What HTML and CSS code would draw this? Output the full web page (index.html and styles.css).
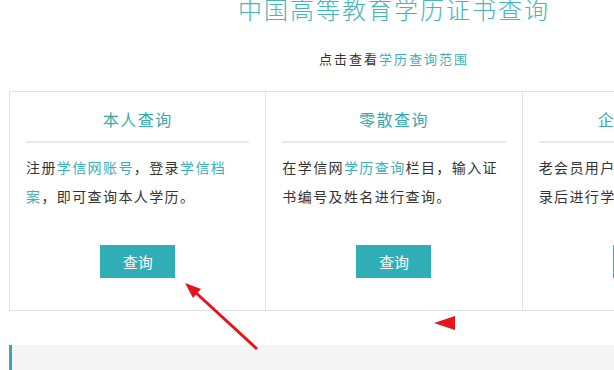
FILE: index.html
```html
<!DOCTYPE html>
<html lang="zh-CN">
<head>
    <meta charset="UTF-8">
    <title>学历查询</title>
    <link rel="stylesheet" href="styles.css">
</head>
<body>
    <div class="wrap">
        <h1 class="title">中国高等教育学历证书查询</h1>
        <p class="sub">点击查看<a href="#">学历查询范围</a></p>

        <!-- 三种查询方式 -->
        <div class="cards">
            <div class="card">
                <h3>本人查询</h3>
                <p>注册<a href="#">学信网账号</a>，登录<a href="#">学信档案</a>，即可查询本人学历。</p>
                <a class="btn" href="#">查询</a>
            </div>
            <div class="card">
                <h3>零散查询</h3>
                <p>在学信网<a href="#">学历查询</a>栏目，输入证书编号及姓名进行查询。</p>
                <a class="btn" href="#">查询</a>
            </div>
            <div class="card">
                <h3>企业用户查询</h3>
                <p>老会员用户可继续使用原账号登录后进行学历查询。</p>
                <a class="btn" href="#">查询</a>
            </div>
        </div>

        <div class="notice"></div>
    </div>

    <!-- 标注箭头 -->
    <svg class="marks" width="614" height="370" viewBox="0 0 614 370">
        <line x1="257" y1="349" x2="194" y2="291" stroke="#e8141a" stroke-width="3"/>
        <polygon points="185,283 201,289 193,298" fill="#e8141a"/>
        <polygon points="434,323 455,316 455,330" fill="#e8141a"/>
    </svg>
</body>
</html>
```

FILE: styles.css
```css
html, body {
    margin: 0;
    padding: 0;
    overflow: hidden;
    background: #fff;
}

body {
    font-family: "Noto Sans CJK SC", "Noto Sans", sans-serif;
    color: #333;
    position: relative;
    width: 614px;
    height: 370px;
}

a {
    color: #3ab0b6;
    text-decoration: none;
}

.wrap {
    width: 770px;
    margin-left: 9px;
}

.title {
    margin: -6px 0 0;
    font-size: 24px;
    line-height: 30px;
    font-weight: 300;
    letter-spacing: 2px;
    color: #44b5b8;
    text-align: center;
}

.sub {
    margin: 25px 0 0;
    font-size: 13px;
    line-height: 20px;
    letter-spacing: 2px;
    text-align: center;
}

.cards {
    display: flex;
    margin-top: 22px;
    border: 1px solid #e2e2e2;
}

.card {
    width: 224px;
    padding: 0 16px 32px;
    border-right: 1px solid #e2e2e2;
}

.card:last-child {
    border-right: none;
}

.card h3 {
    margin: 0;
    padding: 8px 0 3px;
    font-size: 16px;
    line-height: 38px;
    font-weight: normal;
    letter-spacing: 1.5px;
    color: #3aa9ae;
    text-align: center;
    border-bottom: 2px solid #e9e9e9;
}

.card p {
    margin: 10px 0 0;
    font-size: 14px;
    line-height: 29px;
    letter-spacing: 1.4px;
    height: 58px;
}

.btn {
    display: block;
    width: 75px;
    height: 33px;
    margin: 34px auto 0;
    line-height: 33px;
    text-align: center;
    font-size: 15px;
    color: #fff;
    background: #30aeb6;
}

.notice {
    margin-top: 34px;
    height: 25px;
    background: #f5f5f5;
    border-left: 3px solid #3aa9ae;
}

.marks {
    position: absolute;
    top: 0;
    left: 0;
}
```
